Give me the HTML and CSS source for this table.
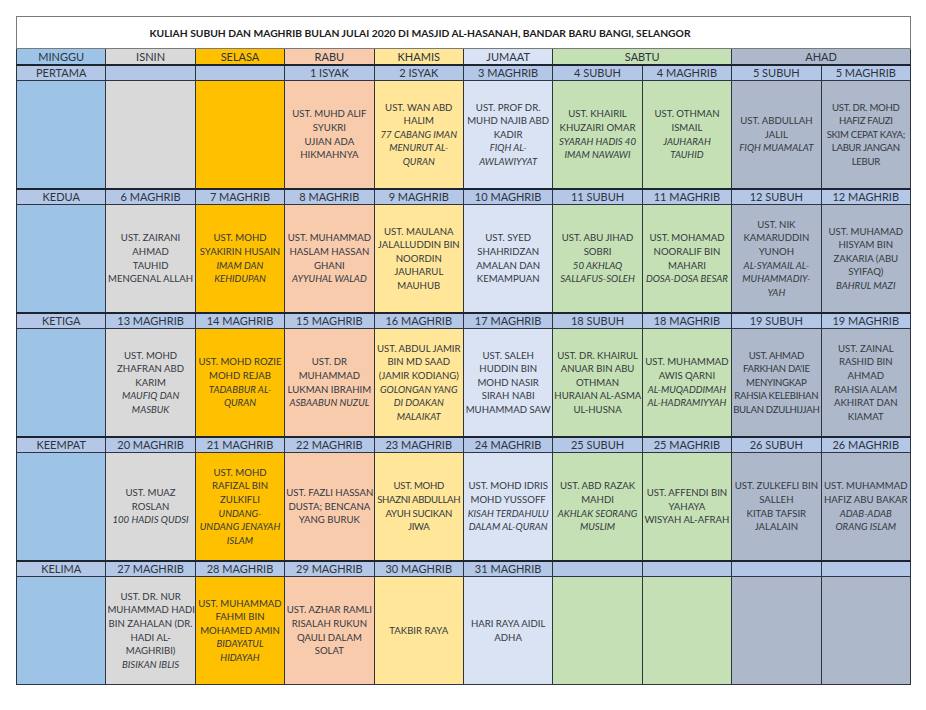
FILE: index.html
```html
<!DOCTYPE html>
<html lang="ms">
<head>
<meta charset="utf-8">
<title>Kuliah Subuh dan Maghrib Bulan Julai 2020</title>
<link rel="stylesheet" href="styles.css">
</head>
<body>
<table class="jadual">
  <colgroup>
    <col class="c-minggu">
    <col class="c-isnin">
    <col class="c-selasa">
    <col class="c-rabu">
    <col class="c-khamis">
    <col class="c-jumaat">
    <col class="c-sabtu">
    <col class="c-sabtu">
    <col class="c-ahad">
    <col class="c-ahad">
  </colgroup>
  <tr class="title-row">
    <td colspan="10" class="title">KULIAH SUBUH DAN MAGHRIB BULAN JULAI 2020 DI MASJID AL-HASANAH, BANDAR BARU BANGI, SELANGOR</td>
  </tr>
  <tr class="head">
    <td>MINGGU</td><td>ISNIN</td><td>SELASA</td><td>RABU</td><td>KHAMIS</td><td>JUMAAT</td><td colspan="2">SABTU</td><td colspan="2">AHAD</td>
  </tr>

  <tr class="dates">
    <td>PERTAMA</td><td></td><td></td><td>1 ISYAK</td><td>2 ISYAK</td><td>3 MAGHRIB</td><td>4 SUBUH</td><td>4 MAGHRIB</td><td>5 SUBUH</td><td>5 MAGHRIB</td>
  </tr>
  <tr class="body">
    <td></td>
    <td></td>
    <td></td>
    <td>UST. MUHD ALIF<br>SYUKRI<br>UJIAN ADA<br>HIKMAHNYA</td>
    <td>UST. WAN ABD<br>HALIM<br><i>77 CABANG IMAN<br>MENURUT AL-<br>QURAN</i></td>
    <td>UST. PROF DR.<br>MUHD NAJIB ABD<br>KADIR<br><i>FIQH AL-<br>AWLAWIYYAT</i></td>
    <td>UST. KHAIRIL<br>KHUZAIRI OMAR<br><i>SYARAH HADIS 40<br>IMAM NAWAWI</i></td>
    <td>UST. OTHMAN<br>ISMAIL<br><i>JAUHARAH<br>TAUHID</i></td>
    <td>UST. ABDULLAH<br>JALIL<br><i>FIQH MUAMALAT</i></td>
    <td class="tight">UST. DR. MOHD<br>HAFIZ FAUZI<br>SKIM CEPAT KAYA;<br>LABUR JANGAN<br>LEBUR</td>
  </tr>

  <tr class="dates">
    <td>KEDUA</td><td>6 MAGHRIB</td><td>7 MAGHRIB</td><td>8 MAGHRIB</td><td>9 MAGHRIB</td><td>10 MAGHRIB</td><td>11 SUBUH</td><td>11 MAGHRIB</td><td>12 SUBUH</td><td>12 MAGHRIB</td>
  </tr>
  <tr class="body">
    <td></td>
    <td>UST. ZAIRANI<br>AHMAD<br>TAUHID<br>MENGENAL ALLAH</td>
    <td>UST. MOHD<br>SYAKIRIN HUSAIN<br><i>IMAM DAN<br>KEHIDUPAN</i></td>
    <td>UST. MUHAMMAD<br>HASLAM HASSAN<br>GHANI<br><i>AYYUHAL WALAD</i></td>
    <td>UST. MAULANA<br>JALALLUDDIN BIN<br>NOORDIN<br>JAUHARUL<br>MAUHUB</td>
    <td>UST. SYED<br>SHAHRIDZAN<br>AMALAN DAN<br>KEMAMPUAN</td>
    <td>UST. ABU JIHAD<br>SOBRI<br><i>50 AKHLAQ<br>SALLAFUS-SOLEH</i></td>
    <td>UST. MOHAMAD<br>NOORALIF BIN<br>MAHARI<br><i>DOSA-DOSA BESAR</i></td>
    <td>UST. NIK<br>KAMARUDDIN<br>YUNOH<br><i>AL-SYAMAIL AL-<br>MUHAMMADIY-<br>YAH</i></td>
    <td>UST. MUHAMAD<br>HISYAM BIN<br>ZAKARIA (ABU<br>SYIFAQ)<br><i>BAHRUL MAZI</i></td>
  </tr>

  <tr class="dates">
    <td>KETIGA</td><td>13 MAGHRIB</td><td>14 MAGHRIB</td><td>15 MAGHRIB</td><td>16 MAGHRIB</td><td>17 MAGHRIB</td><td>18 SUBUH</td><td>18 MAGHRIB</td><td>19 SUBUH</td><td>19 MAGHRIB</td>
  </tr>
  <tr class="body">
    <td></td>
    <td>UST. MOHD<br>ZHAFRAN ABD<br>KARIM<br><i>MAUFIQ DAN<br>MASBUK</i></td>
    <td>UST. MOHD ROZIE<br>MOHD REJAB<br><i>TADABBUR AL-<br>QURAN</i></td>
    <td>UST. DR<br>MUHAMMAD<br>LUKMAN IBRAHIM<br><i>ASBAABUN NUZUL</i></td>
    <td>UST. ABDUL JAMIR<br>BIN MD SAAD<br>(JAMIR KODIANG)<br><i>GOLONGAN YANG<br>DI DOAKAN<br>MALAIKAT</i></td>
    <td>UST. SALEH<br>HUDDIN BIN<br>MOHD NASIR<br>SIRAH NABI<br>MUHAMMAD SAW</td>
    <td>UST. DR. KHAIRUL<br>ANUAR BIN ABU<br>OTHMAN<br>HURAIAN AL-ASMA<br>UL-HUSNA</td>
    <td>UST. MUHAMMAD<br>AWIS QARNI<br><i>AL-MUQADDIMAH<br>AL-HADRAMIYYAH</i></td>
    <td class="tight">UST. AHMAD<br>FARKHAN DA'IE<br>MENYINGKAP<br>RAHSIA KELEBIHAN<br>BULAN DZULHIJJAH</td>
    <td>UST. ZAINAL<br>RASHID BIN<br>AHMAD<br>RAHSIA ALAM<br>AKHIRAT DAN<br>KIAMAT</td>
  </tr>

  <tr class="dates">
    <td>KEEMPAT</td><td>20 MAGHRIB</td><td>21 MAGHRIB</td><td>22 MAGHRIB</td><td>23 MAGHRIB</td><td>24 MAGHRIB</td><td>25 SUBUH</td><td>25 MAGHRIB</td><td>26 SUBUH</td><td>26 MAGHRIB</td>
  </tr>
  <tr class="body">
    <td></td>
    <td>UST. MUAZ<br>ROSLAN<br><i>100 HADIS QUDSI</i></td>
    <td>UST. MOHD<br>RAFIZAL BIN<br>ZULKIFLI<br><i>UNDANG-<br>UNDANG JENAYAH<br>ISLAM</i></td>
    <td>UST. FAZLI HASSAN<br>DUSTA; BENCANA<br>YANG BURUK</td>
    <td class="tight">UST. MOHD<br>SHAZNI ABDULLAH<br>AYUH SUCIKAN<br>JIWA</td>
    <td>UST. MOHD IDRIS<br>MOHD YUSSOFF<br><i>KISAH TERDAHULU<br>DALAM AL-QURAN</i></td>
    <td>UST. ABD RAZAK<br>MAHDI<br><i>AKHLAK SEORANG<br>MUSLIM</i></td>
    <td>UST. AFFENDI BIN<br>YAHAYA<br>WISYAH AL-AFRAH</td>
    <td>UST. ZULKEFLI BIN<br>SALLEH<br>KITAB TAFSIR<br>JALALAIN</td>
    <td>UST. MUHAMMAD<br>HAFIZ ABU BAKAR<br><i>ADAB-ADAB<br>ORANG ISLAM</i></td>
  </tr>

  <tr class="dates">
    <td>KELIMA</td><td>27 MAGHRIB</td><td>28 MAGHRIB</td><td>29 MAGHRIB</td><td>30 MAGHRIB</td><td>31 MAGHRIB</td><td></td><td></td><td></td><td></td>
  </tr>
  <tr class="body">
    <td></td>
    <td>UST. DR. NUR<br>MUHAMMAD HADI<br>BIN ZAHALAN (DR.<br>HADI AL-<br>MAGHRIBI)<br><i>BISIKAN IBLIS</i></td>
    <td>UST. MUHAMMAD<br>FAHMI BIN<br>MOHAMED AMIN<br><i>BIDAYATUL<br>HIDAYAH</i></td>
    <td>UST. AZHAR RAMLI<br>RISALAH RUKUN<br>QAULI DALAM<br>SOLAT</td>
    <td>TAKBIR RAYA</td>
    <td>HARI RAYA AIDIL<br>ADHA</td>
    <td></td>
    <td></td>
    <td></td>
    <td></td>
  </tr>
</table>
</body>
</html>
```

FILE: styles.css
```css
html, body {
  background: #ffffff;
}
body {
  margin: 16px 0 0 16px;
  font-family: Lato, "Liberation Sans", sans-serif;
  color: #33383f;
}
.jadual {
  width: 895px;
  table-layout: fixed;
  border-collapse: collapse;
  text-align: center;
}
.c-minggu { background: #9dc3e6; }
.c-isnin { background: #d9d9d9; }
.c-selasa { background: #ffc000; }
.c-rabu { background: #f8cbad; }
.c-khamis { background: #ffe699; }
.c-jumaat { background: #dae3f3; }
.c-sabtu { background: #c5e0b4; }
.c-ahad { background: #adb9ca; }

.jadual td {
  border: 1px solid #2f3540;
  padding: 0 1px;
  vertical-align: middle;
  overflow: hidden;
}
.title-row td.title {
  background: #ffffff;
  height: 31px;
  padding: 0 87px 0 0;
  font-weight: 700;
  font-size: 10.3px;
  color: #1a1a1a;
  border-color: #7a7a7a;
}
.head td {
  height: 15px;
  font-size: 11px;
  line-height: 14px;
  color: #2d3440;
}
.dates {
  background: #b4c7e7;
}
.dates td {
  height: 14px;
  font-size: 11px;
  line-height: 14px;
  border-top: 2px solid #1c2430;
  color: #2d3440;
}
.body td {
  height: 107px;
  font-size: 9.6px;
  line-height: 13.6px;
  white-space: nowrap;
}
.body td.tight {
  letter-spacing: -0.3px;
}
.body td i {
  font-style: italic;
}
```
